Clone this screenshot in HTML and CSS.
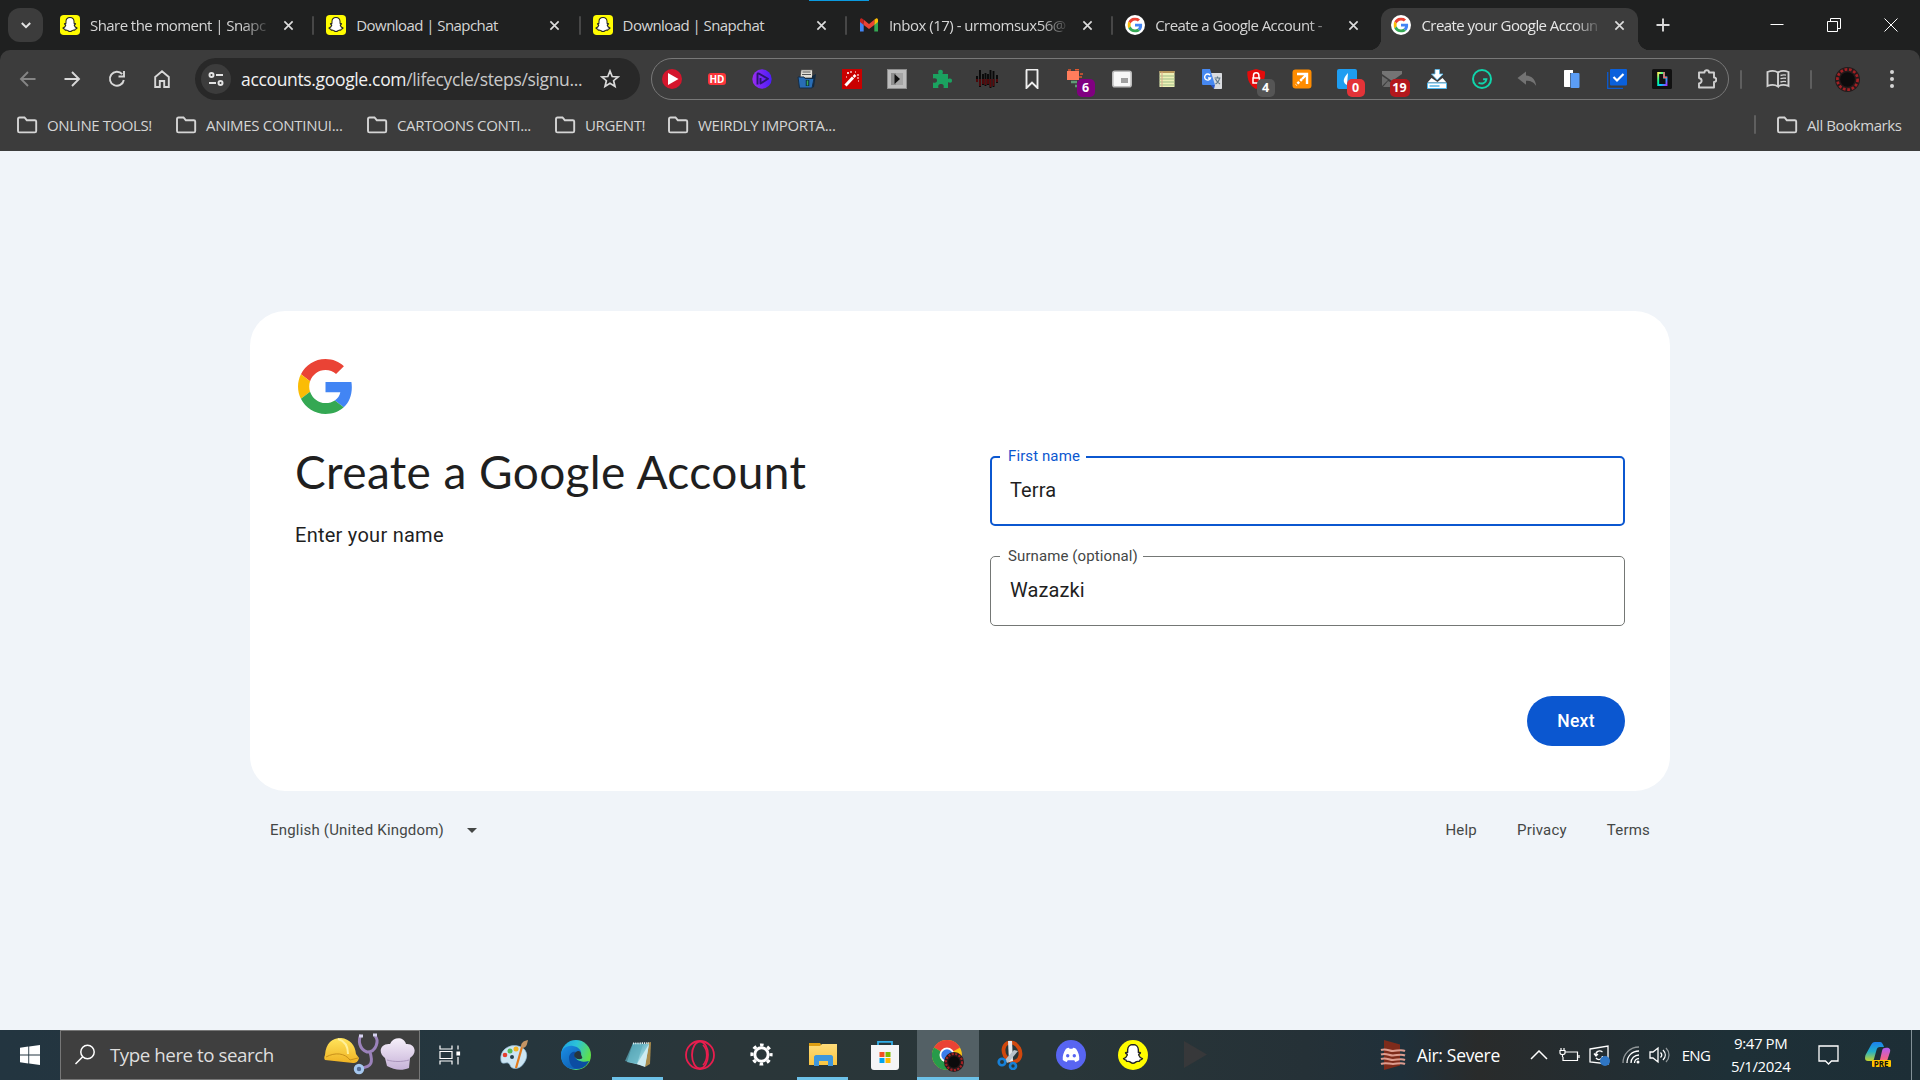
FILE: index.html
```html
<!DOCTYPE html>
<html lang="en">
<head>
<meta charset="utf-8">
<title>Create your Google Account</title>
<link rel="stylesheet" href="styles.css">
</head>
<body>
<svg class="defs" width="0" height="0" aria-hidden="true">
  <defs>
    <linearGradient id="edgeTop" x1="0" y1="0" x2="1" y2=".4"><stop offset="0" stop-color="#1b9de2"/><stop offset=".5" stop-color="#2cc3d8"/><stop offset="1" stop-color="#5ee04b"/></linearGradient>
    <linearGradient id="edgeLow" x1="0" y1="0" x2="1" y2="1"><stop offset="0" stop-color="#1a8fe6"/><stop offset="1" stop-color="#0b4fa0"/></linearGradient>
    <linearGradient id="helmet" x1="0" y1="0" x2="0" y2="1"><stop offset="0" stop-color="#ffe45c"/><stop offset="1" stop-color="#f0b323"/></linearGradient>
    <linearGradient id="hat" x1="0" y1="0" x2="0" y2="1"><stop offset="0" stop-color="#f6effa"/><stop offset="1" stop-color="#c6b2d8"/></linearGradient>
    <linearGradient id="violet" x1="0" y1="0" x2="1" y2="0"><stop offset="0" stop-color="#9a2cf0"/><stop offset="1" stop-color="#4b1dfa"/></linearGradient>
    <linearGradient id="note" x1="0" y1="0" x2="1" y2="1"><stop offset="0" stop-color="#2f8095"/><stop offset=".6" stop-color="#8fd0dc"/><stop offset="1" stop-color="#e2f5f8"/></linearGradient>
    <linearGradient id="folderY" x1="0" y1="0" x2="0" y2="1"><stop offset="0" stop-color="#ffdc7a"/><stop offset="1" stop-color="#fbc540"/></linearGradient>
    <linearGradient id="copA" x1="0" y1="0" x2="0" y2="1"><stop offset="0" stop-color="#1b7ff0"/><stop offset=".5" stop-color="#23b0c8"/><stop offset="1" stop-color="#c5d52c"/></linearGradient>
    <linearGradient id="copB" x1="0" y1="0" x2="0" y2="1"><stop offset="0" stop-color="#b35cf5"/><stop offset=".6" stop-color="#f0628e"/><stop offset="1" stop-color="#fd9a57"/></linearGradient>
    <linearGradient id="giph" x1="0" y1="0" x2="1" y2="1"><stop offset="0" stop-color="#fff35c"/><stop offset=".35" stop-color="#00ff99"/><stop offset=".65" stop-color="#00ccff"/><stop offset="1" stop-color="#9933ff"/></linearGradient>
    <symbol id="ghost" viewBox="0 0 24 24"><path d="M12 4c-2.800 0-4.300 2-4.300 4.300v2c-.6.300-1.400-.3-1.700.3-.2.700 1.500 1 1.500 1.700-.5 1.500-1.600 2.500-3 3 .2.900 1.400.9 2 1.200.2.600.2 1 .6 1 .8 0 1.400-.2 2.200.2.900.6 1.500 1.300 2.700 1.300s1.800-.7 2.700-1.300c.8-.4 1.400-.2 2.200-.2.400 0 .4-.4.6-1 .6-.3 1.800-.3 2-1.200-1.400-.5-2.500-1.500-3-3 0-.7 1.700-1 1.500-1.700-.3-.6-1.100 0-1.700-.3v-2C16.300 6 14.800 4 12 4Z" fill="#fff" stroke="#222" stroke-width="1.100"/></symbol>
    <symbol id="snap" viewBox="0 0 24 24"><rect width="24" height="24" rx="4.500" fill="#fffc00"/><use href="#ghost" x="-1.500" y="-1.500" width="27" height="27"/></symbol>
    <symbol id="g" viewBox="0 0 48 48"><path fill="#ea4335" d="M24 9.500c3.540 0 6.710 1.220 9.210 3.600l6.850-6.850C35.900 2.380 30.470 0 24 0 14.620 0 6.510 5.380 2.560 13.220l7.980 6.190C12.430 13.720 17.740 9.500 24 9.500z"/><path fill="#4285f4" d="M46.980 24.550c0-1.570-.15-3.090-.38-4.550H24v9.020h12.940c-.58 2.960-2.260 5.480-4.780 7.180l7.730 6c4.510-4.180 7.090-10.360 7.090-17.650z"/><path fill="#fbbc05" d="M10.530 28.590c-.48-1.450-.76-2.990-.76-4.590s.27-3.140.76-4.590l-7.980-6.190C.92 16.460 0 20.120 0 24c0 3.880.92 7.540 2.560 10.780l7.970-6.190z"/><path fill="#34a853" d="M24 48c6.480 0 11.930-2.130 15.890-5.810l-7.730-6c-2.150 1.450-4.920 2.300-8.160 2.300-6.260 0-11.570-4.220-13.470-9.910l-7.980 6.190C6.510 42.620 14.620 48 24 48z"/></symbol>
    <symbol id="gfav" viewBox="0 0 24 24"><circle cx="12" cy="12" r="12" fill="#fff"/><use href="#g" x="3" y="3" width="18" height="18"/></symbol>
    <symbol id="x" viewBox="0 0 12 12"><path d="M1.500 1.500l9 9m0-9l-9 9" stroke="currentColor" stroke-width="1.800" fill="none"/></symbol>
    <symbol id="folder" viewBox="0 0 22 18"><path d="M2 3.200C2 2.200 2.600 1.500 3.500 1.500h5l2.300 2.700h8c.8 0 1.400.6 1.400 1.400v9.300c0 .9-.6 1.500-1.400 1.500H3.500c-.9 0-1.500-.6-1.500-1.500Z" fill="none" stroke="currentColor" stroke-width="1.900"/></symbol>
    <symbol id="beads" viewBox="0 0 24 24"><circle cx="12" cy="12" r="12" fill="#251a1b"/><circle cx="12" cy="12" r="9.700" fill="none" stroke="#a32024" stroke-width="2.600" stroke-dasharray="2.600 1.660"/><circle cx="12" cy="12" r="7" fill="#0c0b0c"/></symbol>
  </defs>
</svg>

<header class="browser">
  <div class="load-strip"></div>
  <div class="tabstrip">
    <div class="tab-search"><svg width="12" height="12" viewBox="0 0 12 12"><path d="M1.800 4l4.200 4.200L10.200 4" fill="none" stroke="#e3e3e3" stroke-width="2"/></svg></div>
    <div class="tab"><svg class="fav"><use href="#snap"/></svg><span class="tab-title fade">Share the moment | Snapc</span><svg class="close"><use href="#x"/></svg></div>
    <div class="tab split"><svg class="fav"><use href="#snap"/></svg><span class="tab-title">Download | Snapchat</span><svg class="close"><use href="#x"/></svg></div>
    <div class="tab split"><svg class="fav"><use href="#snap"/></svg><span class="tab-title">Download | Snapchat</span><svg class="close"><use href="#x"/></svg></div>
    <div class="tab split"><svg class="fav" viewBox="0 0 20 20"><path d="M1 5v11.500h3.700V8z" fill="#4285f4"/><path d="M19 5v11.500h-3.700V8z" fill="#34a853"/><path d="M15.300 4.800 17 3.500c1-.7 2 .2 2 1.500v2l-3.700 3z" fill="#fbbc04"/><path d="M4.700 4.800 10 8.900l5.300-4.100V10L10 14 4.700 10z" fill="#ea4335"/><path d="M1 5c0-1.300 1-2.200 2-1.500l1.700 1.300V10L1 7z" fill="#c5221f"/></svg><span class="tab-title fade inbox">Inbox (17) - urmomsux56@</span><svg class="close"><use href="#x"/></svg></div>
    <div class="tab split"><svg class="fav"><use href="#gfav"/></svg><span class="tab-title fade">Create a Google Account -</span><svg class="close"><use href="#x"/></svg></div>
    <div class="tab active"><svg class="fav"><use href="#gfav"/></svg><span class="tab-title fade">Create your Google Accoun</span><svg class="close"><use href="#x"/></svg></div>
    <svg class="new-tab" width="14" height="14" viewBox="0 0 14 14"><path d="M7 .5v13M.5 7h13" stroke="#dadada" stroke-width="1.900"/></svg>
    <div class="win-controls">
      <svg viewBox="0 0 14 14"><path d="M.5 6.500h13" stroke="#fff"/></svg>
      <svg viewBox="0 0 14 14" fill="none" stroke="#fff"><path d="M.5 3.500h10v10H.5zM3.500 3.500v-3h10v10h-3"/></svg>
      <svg viewBox="0 0 14 14"><path d="M.5.500l13 13m0-13l-13 13" stroke="#fff"/></svg>
    </div>
  </div>

  <div class="toolbar">
    <nav class="nav">
      <svg class="dim" viewBox="0 0 20 20"><path d="M17.500 10H3M10 3l-7 7 7 7"/></svg>
      <svg viewBox="0 0 20 20"><path d="M2.500 10H17M10 3l7 7-7 7"/></svg>
      <svg viewBox="0 0 20 20"><path d="M16.800 11A7 7 0 1 1 15.200 5.200M17 2v5.500h-5.500"/></svg>
      <svg viewBox="0 0 20 20"><path d="M3.200 8 10 2.300 16.800 8v10h-4.600v-6H7.800v6H3.200z"/></svg>
    </nav>
    <div class="omnibox">
      <span class="site-info"><svg width="18" height="18" viewBox="0 0 18 18" fill="none" stroke="#e3e3e3" stroke-width="2"><circle cx="4.500" cy="5" r="2"/><path d="M9 5h7M2 13h7"/><circle cx="13.500" cy="13" r="2"/></svg></span>
      <span class="url"><b>accounts.google.com</b>/lifecycle/steps/signu...</span>
      <svg class="star" width="20" height="20" viewBox="0 0 20 20"><path d="M10 2l2.200 5.500 5.900.4-4.500 3.800 1.400 5.800-5-3.200-5 3.200 1.400-5.800L1.900 7.900l5.900-.4z" fill="none" stroke="#dadada" stroke-width="1.700"/></svg>
    </div>
    <div class="extensions">
      <span class="ext"><svg viewBox="0 0 20 20"><circle cx="10" cy="10" r="10" fill="#d4162c"/><path d="M6 4v12l10.500-6z" fill="#fff"/></svg></span>
      <span class="ext"><b class="hd">HD</b></span>
      <span class="ext"><svg viewBox="0 0 20 20"><circle cx="10" cy="10" r="9.700" fill="url(#violet)"/><path d="M5.500 15.500V5.200c0-.8.800-1 1.500-.6l9 5.200-7.500 4.700V9" fill="none" stroke="#2c1470" stroke-width="1.900" stroke-linejoin="round"/></svg></span>
      <span class="ext"><svg viewBox="0 0 20 20"><path d="M3 9 4 .8h11.500V9z" fill="#e3e0d8" stroke="#333" stroke-width=".7"/><path d="M5.500 3h8M5 5.500h9" stroke="#555"/><path d="M15 7l4-2-2 13-3 1z" fill="#12293f"/><path d="M1 8h6l1 1.500h9L15 19H2.500z" fill="#286db5" stroke="#142d47"/><path d="M10.500 11v6" stroke="#0c2c3c" stroke-width="3.500"/><path d="M10.500 11.500v5" stroke="#37a85b" stroke-width="1.500" fill="none"/></svg></span>
      <span class="ext"><svg viewBox="0 0 20 20"><rect width="20" height="20" fill="#c90000"/><path d="M3.500 16.500 11 8.500" stroke="#fff" stroke-width="3"/><path d="M11.500 8l2-2" stroke="#fff" stroke-width="2.500"/><path d="M5 4h2M6 3v2M9 2v2M13 3h1M16 5v2M15 9h2M16 12h1M4 8h1" stroke="#fff" stroke-width="1.100"/></svg></span>
      <span class="ext"><svg viewBox="0 0 20 20"><rect width="20" height="20" fill="#8d8d8d"/><rect x="1" y="1" width="18" height="18" fill="#bdbdbd"/><rect x="4" y="4" width="12" height="12" fill="#8e8e8e"/><rect x="9" y="4" width="7" height="12" fill="#a5a5a5"/><path d="M7.500 5v10l5.500-5z" fill="#111"/></svg></span>
      <span class="ext"><svg viewBox="0 0 20 20"><path d="M1 5h5.500C5.500 2 6.500.700 8.500.700s3 1.300 2 4.300H16v5c3-1 4 0 4 1.700s-1 2.600-4 1.600V19h-4.500c.8-3-.4-4-2.500-4s-3.300 1-2.500 4H1v-5.500c3 .8 4-.3 4-2s-1-2.600-4-2z" fill="#1ba260"/></svg></span>
      <span class="ext wide"><svg viewBox="0 0 22 20"><path d="M1 7v6M4 1v17M7 5v11M9.500 4v13M12 5v11M14.500 1v18M17.500 2v16M21 6v8" stroke="#090909" stroke-width="1.900"/><path d="M1 10v3M4 10v7M7 10v5M9.500 10v6M12 10v5M14.500 10v8M17.500 10v7M21 10v3" stroke="#5a0a0c" stroke-width="1.700"/></svg></span>
      <span class="ext"><svg viewBox="0 0 20 20"><path d="M4.500 1.500c0-.6.300-1 1-1h9c.7 0 1 .4 1 1V19L10 13.500 4.500 19z" fill="none" stroke="#eee" stroke-width="1.900"/></svg></span>
      <span class="ext"><svg viewBox="0 0 20 20"><path d="M0 2h12v9H0z" fill="#ff7d5c"/><path d="M1 1h3M8 .7h4M13 5h3M12 8h3" stroke="#e2572f" stroke-width="1.600"/><path d="M4 13h6M8 17h3" stroke="#609b78" stroke-width="2.500" fill="none"/></svg><i class="badge purple">6</i></span>
      <span class="ext"><svg viewBox="0 0 20 20"><rect x=".8" y="2.300" width="18.400" height="15.400" rx="2" fill="#f7f7f7" stroke="#bbb" stroke-width="1.600"/><rect x="9" y="9" width="7" height="5" fill="#a0a0a0"/></svg></span>
      <span class="ext"><svg viewBox="0 0 20 20"><rect x="2.500" y="2" width="15" height="16" fill="#eef0b6"/><path d="M2.500 3h15" stroke="#b7975c" stroke-width="2"/><path d="M2.500 7h15M2.500 10h15M2.500 13h15M2.500 16h15" stroke="#9dbd87"/><path d="M5 3v15" stroke="#dca98a"/></svg></span>
      <span class="ext"><svg viewBox="0 0 20 20"><path d="M8 4h11c.6 0 1 .4 1 1v14c0 .6-.4 1-1 1h-7z" fill="#dadce0"/><path d="M1 0h7l5 16H1.500C.5 16 0 15.500 0 14.500V1c0-.6.400-1 1-1z" fill="#4688f1"/><path d="M8.500 16h4.500l-1 4z" fill="#2a56c6"/><path d="M8 6.200A3 3 0 1 0 8.500 9H6" fill="none" stroke="#fff" stroke-width="1.400"/><path d="M12.500 9h6M15.500 7.500V9M17.500 9c0 2-2 5-4 6m0-5c1 2 2.500 4 4.500 5" fill="none" stroke="#607988" stroke-width="1.200"/></svg></span>
      <span class="ext"><svg viewBox="0 0 20 20"><path d="M9 0l9 2.500c.3 8-2 14-9 17.500C2.500 16.500 0 10.500.3 2.500z" fill="#e50b0b"/><path d="M6.500 9V6.500a2.700 2.700 0 0 1 5.400 0V9M6 9h6.500v5H6z" fill="none" stroke="#fff" stroke-width="1.500"/></svg><i class="badge grey">4</i></span>
      <span class="ext"><svg viewBox="0 0 20 20"><rect x=".5" y=".5" width="19" height="19" rx="3" fill="#ff8c00"/><path d="M5 5h10v10M15 5l-5 5" fill="none" stroke="#fff" stroke-width="2.400"/><path d="M10 10 4 16" stroke="#fff" stroke-width="2.500" stroke-dasharray="2.500 1.500"/></svg></span>
      <span class="ext"><svg viewBox="0 0 20 20"><rect width="20" height="20" rx="2" fill="#1e9df1"/><path d="M11 4c-6 6-5 10-1 12" fill="#fff"/></svg><i class="badge red">0</i></span>
      <span class="ext"><svg viewBox="0 0 20 20"><path d="M0 2h20v3l-10 7L0 5z" fill="#747474"/><path d="M0 7l6 4-6 6zM10 14l3-2 6 6H1l5-6z" fill="#6a6a6a"/></svg><i class="badge crimson">19</i></span>
      <span class="ext"><svg viewBox="0 0 20 20"><path d="M8 .5h4.500V5H16l-5.800 6L4.500 5H8z" fill="#fff" stroke="#58bdf1" stroke-width=".8"/><path d="M4.500 9 .5 13.500h19L15.500 9l-5 4z" fill="#fff"/><path d="M.5 14h19v5.500H.5z" fill="#fff" stroke="#4eb8ef"/><path d="M2.500 17h10" stroke="#3ba7df" stroke-width="1.300"/></svg></span>
      <span class="ext"><svg viewBox="0 0 20 20"><circle cx="10" cy="10" r="9" fill="none" stroke="#10d5ab" stroke-width="2"/><path d="M6.500 13.700c3.500 2 7.500.3 7.900-3.400h-3.300" fill="none" stroke="#10d5ab" stroke-width="1.900"/></svg></span>
      <span class="ext"><svg viewBox="0 0 20 20"><path d="M.5 9 9 2.500v4c6 .3 9.500 4.500 10.200 10.500-2.500-4-5.500-5.300-10.200-5.300v4z" fill="#737373"/></svg></span>
      <span class="ext"><svg viewBox="0 0 20 20"><path d="M3 1h8v3H8v14H3c-.6 0-1-.4-1-1V2c0-.6.400-1 1-1z" fill="#fff"/><rect x="8.500" y="4" width="9" height="15" rx="1" fill="#5b9df5"/></svg></span>
      <span class="ext"><svg viewBox="0 0 20 20"><path d="M.700 3v16.300H16" fill="none" stroke="#0a5ad0" stroke-width="1.300"/><rect x="3" y="0" width="17" height="16.500" rx="1" fill="#0a60dc"/><path d="M6.500 8l3.500 3.500L16.500 5" fill="none" stroke="#fff" stroke-width="2.200"/></svg></span>
      <span class="ext"><svg viewBox="0 0 20 20"><rect width="20" height="20" rx="1.500" fill="#111"/><path d="M12 4H6.200v12h8.300V8.500H12z" fill="none" stroke="url(#giph)" stroke-width="1.900"/><path d="M12 3v5.500h3" stroke="#ff5f66" stroke-width="1.500" fill="none"/></svg></span>
      <span class="ext"><svg viewBox="0 0 20 20"><path d="M2 3.500h5.500c0-3 4.500-3 4.500 0h5v5c3 0 3 4.500 0 4.500v5.500H2v-4c3.500-.8 3.500-4.700 0-5.500z" fill="none" stroke="#cfcfcf" stroke-width="1.900" stroke-linejoin="round"/></svg></span>
    </div>
    <i class="rule rule-a"></i>
    <svg class="reading" width="24" height="20" viewBox="0 0 24 20" fill="none" stroke="#d2d2d2" stroke-width="1.900"><path d="M12 3.500v14c-3-2-7-2-10.500-.5V3C5 1.500 9 1.500 12 3.500c3-2 7-2 10.500-.5v14c-3.500-1.500-7.500-1.500-10.500.5"/><path d="M14.500 6.500c2-.7 3.500-.8 5.500-.4M14.500 9.700c2-.7 3.500-.8 5.500-.4M14.500 13c2-.7 3.500-.8 5.500-.4" stroke-width="1.400"/></svg>
    <i class="rule rule-b"></i>
    <svg class="avatar"><use href="#beads"/></svg>
    <svg class="dots" width="6" height="20" viewBox="0 0 6 20" fill="#d5d5d5"><circle cx="3" cy="3" r="2"/><circle cx="3" cy="10" r="2"/><circle cx="3" cy="17" r="2"/></svg>
  </div>

  <div class="bookmarks">
    <span class="bm w1"><svg><use href="#folder"/></svg><span>ONLINE TOOLS!</span></span>
    <span class="bm w2"><svg><use href="#folder"/></svg><span>ANIMES CONTINUI...</span></span>
    <span class="bm w3"><svg><use href="#folder"/></svg><span>CARTOONS CONTI...</span></span>
    <span class="bm w4"><svg><use href="#folder"/></svg><span>URGENT!</span></span>
    <span class="bm w5"><svg><use href="#folder"/></svg><span>WEIRDLY IMPORTA...</span></span>
    <i class="rule bm-rule"></i>
    <span class="bm all"><svg><use href="#folder"/></svg><span>All Bookmarks</span></span>
  </div>
</header>

<main class="page">
  <section class="card">
    <div class="intro">
      <svg class="logo"><use href="#g"/></svg>
      <h1>Create a Google Account</h1>
      <p>Enter your name</p>
    </div>
    <form class="form">
      <fieldset class="field focused"><legend>First name</legend><span class="value">Terra</span></fieldset>
      <fieldset class="field"><legend>Surname (optional)</legend><span class="value">Wazazki</span></fieldset>
      <button class="next" type="button">Next</button>
    </form>
  </section>
  <footer class="footer">
    <span class="lang">English (United Kingdom)</span><i class="caret"></i>
    <nav class="links"><span>Help</span><span>Privacy</span><span>Terms</span></nav>
  </footer>
</main>

<div class="taskbar">
  <div class="start"><svg width="20" height="20" viewBox="0 0 20 20" fill="#fff"><path d="M0 2.800 8.300 1.600v7.900H0zM9.200 1.500 20 0v9.500H9.200zM0 10.400h8.300v8L0 17.200zM9.200 10.400H20V20L9.200 18.500z"/></svg></div>
  <div class="search">
    <svg class="glass" width="22" height="22" viewBox="0 0 22 22" fill="none" stroke="#fff" stroke-width="1.500"><circle cx="13.500" cy="8" r="6.700"/><path d="M8.700 12.800 1.500 20"/></svg>
    <span class="search-text">Type here to search</span>
    <svg class="doodle" width="94" height="44" viewBox="0 0 94 44"><path d="M2 22C3 10 9 5 18 5c9 1 14 7 15 16l3 4c-1 4-3 5-6 5L2 27c-1-1-1-3 0-5z" fill="url(#helmet)"/><path d="M3 24c9-5 19-4 24 3l8-2" fill="none" stroke="#c8901a"/><path d="M15 6c7 2 10 8 10 15" fill="none" stroke="#fff09a" stroke-width="2"/><path d="M38 2c-3 5-2 14 6 17 10 0 12-12 8-16M47 19c3 10 2 15-9 16" fill="none" stroke="#9b82bb" stroke-width="3"/><path d="M36 3h4M50 2h4" stroke="#d5d2ee" stroke-width="3"/><circle cx="36" cy="36" r="3.700" fill="#526b95" stroke="#a6c8ef" stroke-width="3"/><path d="M62 25c-8-6-4-15 5-14 4-8 14-7 16 0 9-1 12 9 4 14l-1 10c-7 3-15 2-22-2z" fill="url(#hat)"/><path d="M64 27c7 2 15 2 22 0" stroke="#aa94bd" fill="none"/></svg>
  </div>
  <div class="task view"><svg width="22" height="20" viewBox="0 0 22 20" fill="none" stroke="#fff" stroke-width="1.200"><path d="M1 .5V4h12V.5M1 19.500V16h12v3.500M1 6.500h12v7H1zM19 .5v4M19 12v7.500"/><path d="M18 7h2.500v3H18z" fill="#fff"/></svg></div>
  <div class="task"><svg viewBox="0 0 30 30"><path d="M2 21C0 10 10 4 19 6c9 2 11 10 6 17-4 7-13 7-14 2-2-5-8 1-9-4z" fill="#cce5f3" stroke="#8fb9d4" stroke-width=".7"/><circle cx="11" cy="11" r="2.500" fill="#55b957"/><circle cx="17" cy="9" r="2.500" fill="#f3b324"/><circle cx="6" cy="15" r="2.300" fill="#e53e31"/><circle cx="13" cy="17" r="2" fill="#28414d"/><path d="M23 7 17 28" stroke="#e37b1d" stroke-width="2.200"/><path d="M22 7c0-4 2-6 7-7-1 4-1 7-5 8z" fill="#c49464"/></svg></div>
  <div class="task"><svg viewBox="0 0 30 30"><circle cx="15" cy="15" r="15" fill="url(#edgeTop)"/><path d="M0 15c0-6 6-10 12-9 7 1 9 6 8 9-1-4-7-4-8 0-1 7 6 9 15 7-5 9-27 12-27-7z" fill="url(#edgeLow)"/><path d="M8 17c1-5 5-6 7-5-4 5 2 12 13 9-5 11-20 11-20-4z" fill="#0c4da2"/><path d="M15 12c-4 3-1 8 5 7 3-1 0-3 0-5 0-3-3-4-5-2z" fill="#26353c"/></svg></div>
  <div class="task open"><svg viewBox="0 0 30 30"><path d="M24 3l4-1-1 22-5 3z" fill="#a98b4c"/><path d="M10 3l16 1-4 22-18-4z" fill="url(#note)"/><path d="M10 3 2 21l12 3 6-20z" fill="#5eaebe" opacity=".7"/><path d="M26 4 14 24l8 3z" fill="#cdebf1"/><path d="M10 3.500l16-.5" stroke="#e3eef0" stroke-width="1.800" stroke-dasharray="1.200 1"/></svg></div>
  <div class="task"><svg viewBox="0 0 30 30" fill="none" stroke="#e81e4e"><circle cx="15" cy="15" r="14" stroke-width="1.800"/><ellipse cx="15" cy="15" rx="8" ry="13.500" stroke-width="1.800"/><path d="M18 5c5 5 5 15 0 20" stroke-width="1.600"/></svg></div>
  <div class="task"><svg viewBox="0 0 30 30" fill="none" stroke="#fff"><circle cx="14.500" cy="14.500" r="6.700" stroke-width="3"/><circle cx="14.500" cy="14.500" r="9.600" stroke-width="3" stroke-dasharray="3.600 3.940" stroke-dashoffset="1.800"/></svg></div>
  <div class="task open"><svg viewBox="0 0 30 30"><path d="M1 3h11l2 3H1z" fill="#dd9e12"/><path d="M1 6h11l2-2h15v21H1z" fill="url(#folderY)"/><path d="M6 26V17c0-1 1-2 2-2h15c1 0 2 1 2 2v9h-5v-5h-9v5z" fill="#3f97dc"/></svg></div>
  <div class="task"><svg viewBox="0 0 30 30"><path d="M8 7V1.800h14V7" fill="none" stroke="#32aee8" stroke-width="1.800"/><path d="M1 5h28v22a3 3 0 0 1-3 3H4a3 3 0 0 1-3-3z" fill="#f5f5f7"/><path d="M9.500 12h5v5h-5z" fill="#f25022"/><path d="M15.500 12h5v5h-5z" fill="#7fba00"/><path d="M9.500 18h5v5h-5z" fill="#00a4ef"/><path d="M15.500 18h5v5h-5z" fill="#ffb900"/></svg></div>
  <div class="task open current"><svg viewBox="0 0 34 32"><circle cx="15" cy="15" r="15" fill="#fbc116"/><path d="M15 15 2 7.500A15 15 0 0 1 28 7.500z" fill="#ea4335"/><path d="M15 15 2 7.500A15 15 0 0 0 15 30l6-11z" fill="#279b4a"/><circle cx="15" cy="15" r="7.500" fill="#fff"/><circle cx="15" cy="15" r="5.700" fill="#3b7ded"/><use href="#beads" x="12" y="12" width="20" height="20"/></svg></div>
  <div class="task"><svg viewBox="0 0 30 30"><ellipse cx="18" cy="12" rx="8" ry="10" transform="rotate(-28 18 12)" fill="none" stroke="#d2480d" stroke-width="3.800"/><path d="M14 1h4l1 20-4 1z" fill="#e5e8eb"/><path d="M20 10l4 1-10 12-4-2z" fill="#b9c2ca"/><circle cx="8" cy="22" r="3.300" fill="none" stroke="#1680d8" stroke-width="2.600"/><circle cx="19" cy="26" r="3" fill="none" stroke="#1680d8" stroke-width="2.600"/></svg></div>
  <div class="task"><svg viewBox="0 0 30 30"><circle cx="15" cy="15" r="15" fill="#5865f2"/><path d="M10 8.700c1-.5 2-.8 3-.9l.5 1h3l.5-1c1 .1 2 .4 3 .9 2.500 3.600 3.700 7.400 3.200 11.300-1.200 1-2.500 1.600-4 2l-.9-1.700h-6.600l-.9 1.700c-1.500-.4-2.800-1-4-2-.4-4 .7-7.700 3.200-11.300z" fill="#fff"/><circle cx="11.700" cy="15.700" r="1.700" fill="#5865f2"/><circle cx="18.300" cy="15.700" r="1.700" fill="#5865f2"/></svg></div>
  <div class="task"><svg viewBox="0 0 30 30"><circle cx="15" cy="15" r="15" fill="#fffc00"/><use href="#ghost" x="0" y="-.5" width="30" height="30"/></svg></div>
  <div class="task"><svg viewBox="0 0 30 30"><path d="M4 1v27l23-13.500z" fill="#37383a"/></svg></div>
  <div class="tray">
    <svg class="air" width="26" height="30" viewBox="0 0 26 30"><path d="M4 0l16 4.500v21L4 30z" fill="#7e2b1b"/><g fill="none" stroke="#dd9c8f" stroke-width="2"><path d="M1 10c5-2 8 1 12 1s8-2 12 0M1 14.500c5-2 8 1 12 1s8-2 12 0M1 19c5-2 8 1 12 1s8-2 12 0M1 24c5-2 8 0 12 0s8-2 12 0"/></g></svg>
    <span class="air-text">Air: Severe</span>
    <svg class="t-ico chev" width="18" height="10" viewBox="0 0 18 10"><path d="M1 9l8-8 8 8" fill="none" stroke="#fff" stroke-width="1.500"/></svg>
    <svg class="t-ico" width="21" height="15" viewBox="0 0 21 15" fill="none" stroke="#fff" stroke-width="1.200"><path d="M6 4h12.500v8.500H4V9M20 7v3M1 2.500h5V5c0 2-5 2-5 0zM2 0v2.500M5 0v2.500M3.500 6.500V9"/></svg>
    <svg class="t-ico" width="21" height="21" viewBox="0 0 21 21" fill="none" stroke="#fff" stroke-width="1.300"><path d="M1 4l18-3v18L1 17z"/><path d="M13.500 7C10 4.500 6.500 7 7 10M5 8.500 7 11l2-2M7 13c2 2.500 6 2 6.500-2"/><circle cx="16" cy="16" r="5" fill="#2f76c4" stroke="none"/></svg>
    <svg class="t-ico wifi" width="18" height="18" viewBox="0 0 18 18" fill="none" stroke="#fff" stroke-width="1.300"><path d="M1 17C1 8 8 1 17 1" opacity=".5"/><path d="M5 17C5 10 10 5 17 5M9 17c0-4.500 3.500-8 8-8M12.500 17c0-2.500 2-4.500 4.500-4.500"/><circle cx="16" cy="16" r="1.500" fill="#fff" stroke="none"/></svg>
    <svg class="t-ico" width="21" height="18" viewBox="0 0 21 18" fill="none" stroke="#fff" stroke-width="1.300"><path d="M1 6h3l5-4v14l-5-4H1zM11.500 6.500c1.500 1.500 1.500 3.500 0 5M14 4c3 3 3 7 0 10"/><path d="M17 2c4 4 4 10 0 14" opacity=".5"/></svg>
    <span class="eng">ENG</span>
    <span class="clock"><span>9:47 PM</span><span class="date">5/1/2024</span></span>
    <svg class="notif" width="21" height="20" viewBox="0 0 21 20"><path d="M1 1h19v15h-6.500L10.500 19l-3-3H1z" fill="none" stroke="#fff" stroke-width="1.300"/></svg>
    <span class="copilot"><svg width="26" height="24" viewBox="0 0 26 24"><path d="M6 3C7 1 8 0 10 0h5c2 0 3 2 4 5h-4c-2 0-3 1-3.500 3L9 17c-.5 1.500-1 2-3 2H3c-3 0-3.500-2-2.500-6z" fill="url(#copA)"/><path d="M20 6c4-1 6 1 5 4l-3 9c-1 3-2 4-4 4h-7c2 0 3-1 3.500-3L17 9c.5-2 1-3 3-3z" fill="url(#copB)"/></svg><b>PRE</b></span>
  </div>
</div>
</body>
</html>
```
FILE: styles.css
```css
* { box-sizing: border-box; }
body { margin: 0; width: 1920px; height: 1080px; overflow: hidden; display: flex; flex-direction: column; font-family: "Open Sans", "Noto Sans", sans-serif; background: #f0f4f9; }
svg { display: block; flex: none; }
.defs { position: absolute; }
i { font-style: normal; }

/* Browser chrome */
.browser { height: 151px; flex: none; background: #1f2020; color: #d5d5d5; position: relative; }
.load-strip { position: absolute; left: 809px; top: 0; width: 60px; height: 1px; background: #0a9ae0; }
.tabstrip { height: 50px; display: flex; align-items: center; padding-left: 8px; }
.tab-search { width: 35px; height: 34px; border-radius: 12px; background: #3c3c3c; display: flex; align-items: center; justify-content: center; margin-right: 5px; }
.tab { width: 266.300px; height: 42px; margin-top: 8px; padding: 0 0 8px 12px; display: flex; align-items: center; flex: none; position: relative; }
.tab.split::before { content: ""; position: absolute; left: -2px; top: 8px; width: 2px; height: 19px; background: #474747; border-radius: 1px; }
.fav { width: 20px; height: 20px; margin-right: 10px; }
.tab-title { width: 179px; white-space: nowrap; font-size: 15px; letter-spacing: -.56px; line-height: 22px; }
.inbox { letter-spacing: -.5px; }
.fade { -webkit-mask-image: linear-gradient(90deg, #000 152px, transparent 182px); mask-image: linear-gradient(90deg, #000 152px, transparent 182px); }
.close { width: 11px; height: 11px; margin-left: 14px; color: #dcdcdc; }
.tab.active { color: #e6e6e6; }
.tab.active::before { content: ""; position: absolute; z-index: 0; left: 2px; top: 0; width: 257px; height: 42px; background: #3c3c3c; border-radius: 12px 12px 0 0; }
.tab.active::after { content: ""; position: absolute; left: -10px; bottom: 0; width: 281px; height: 12px; background: radial-gradient(circle at 0 0, transparent 12px, #3c3c3c 12.500px) left / 12px 12px no-repeat, radial-gradient(circle at 100% 0, transparent 12px, #3c3c3c 12.500px) right / 12px 12px no-repeat; }
.tab.active > * { position: relative; z-index: 1; }
.new-tab { margin-left: 10.700px; }
.win-controls { display: flex; gap: 43px; margin-left: 100px; }
.win-controls svg { width: 14px; height: 14px; }

.toolbar { height: 58px; background: #3c3c3c; border-radius: 10px 10px 0 0; display: flex; align-items: center; padding-left: 17.500px; }
.nav { display: flex; gap: 24.800px; width: 177.500px; flex: none; }
.nav svg { width: 20px; height: 20px; fill: none; stroke: #d8d8d8; stroke-width: 1.900; }
.nav .dim { stroke: #858585; }
.omnibox { width: 445px; height: 42px; border-radius: 21px; background: #282828; display: flex; align-items: center; padding-left: 6px; flex: none; }
.site-info { width: 30px; height: 30px; border-radius: 50%; background: #3c3c3c; display: flex; align-items: center; justify-content: center; flex: none; }
.url { width: 349px; margin-left: 10px; font-size: 17.500px; letter-spacing: -.34px; white-space: nowrap; color: #c9c9c9; }
.url b { font-weight: 400; color: #f1f1f1; }
.star { margin-left: 10px; }
.extensions { width: 1078px; height: 42px; margin-left: 11px; border: 1px solid #787878; border-radius: 21px; display: flex; align-items: center; justify-content: center; flex: none; }
.ext { width: 45px; height: 20px; flex: none; display: flex; align-items: center; justify-content: center; position: relative; right: .5px; }
.ext svg { width: 20px; height: 20px; }
.ext.wide svg { width: 22px; }
.hd { background: #fa3439; color: #fff; font-size: 10px; line-height: 12px; width: 18px; text-align: center; border-radius: 3px; }
.badge { position: absolute; left: 22px; top: 10px; width: 18px; height: 18px; border-radius: 5px; color: #fff; font-weight: 700; font-size: 12.500px; line-height: 18px; text-align: center; }
.purple { background: #800080; }
.grey { background: #555; }
.red { background: #e33338; }
.crimson { background: #b3181d; left: 20px; width: 20px; }
.rule { width: 2px; height: 19px; background: #5f5f5f; border-radius: 1px; flex: none; }
.rule-a { margin: 0 24px 0 11px; }
.rule-b { margin: 0 23px 0 20px; }
.avatar { width: 25px; height: 25px; }
.dots { margin-left: 29px; }

.bookmarks { height: 43px; background: #3c3c3c; display: flex; align-items: center; padding: 0 0 9.500px 16px; font-size: 15px; }
.bm { display: flex; align-items: center; gap: 9px; white-space: nowrap; flex: none; }
.bm svg { width: 22px; height: 18px; }
.w1 { width: 159px; letter-spacing: -.4px; }
.w2 { width: 191px; letter-spacing: -.3px; }
.w3 { width: 188px; letter-spacing: -.35px; }
.w4 { width: 113px; letter-spacing: -.4px; }
.w5 { width: 200px; letter-spacing: -.35px; }
.bm-rule { margin: 0 20px 0 auto; }
.all { width: 144px; letter-spacing: -.42px; }

/* Account page */
.page { flex: 1; padding: 160px 250px 0; font-family: Roboto, "Liberation Sans", sans-serif; color: #1f1f1f; }
.card { width: 1420px; height: 480px; border-radius: 35px; background: #fff; display: flex; justify-content: space-between; padding: 45px 45px; }
.logo { width: 55px; height: 55px; margin: 2.500px 0 0 2.500px; }
.intro h1 { margin: 30px 0 0; font: 400 46px/56px Lato, sans-serif; letter-spacing: .4px; white-space: nowrap; }
.intro p { margin: 20px 0 0; font-size: 20px; line-height: 30px; letter-spacing: .26px; }
.form { width: 635px; padding-top: 92px; display: flex; flex-direction: column; }
.field { width: 635px; height: 78px; margin: 0 0 22px; padding: 0 0 0 19px; border: 1px solid #747775; border-radius: 5px; min-width: 0; }
.field legend { margin-left: -10px; padding: 0 0 0 8px; height: 17px; font-size: 15px; line-height: 17px; color: #444746; width: 143px; white-space: nowrap; letter-spacing: .1px; }
.field.focused { border: 2px solid #0b57d0; padding-left: 18px; }
.field.focused legend { color: #0b57d0; width: 86px; }
.value { display: block; font-size: 20px; line-height: 28px; margin-top: 11px; letter-spacing: .1px; }
.next { align-self: flex-end; width: 98px; height: 50px; margin-top: 48px; border: 0; border-radius: 25px; background: #0b57d0; color: #fff; font: 500 17.500px Roboto, sans-serif; letter-spacing: .3px; }
.footer { display: flex; align-items: center; height: 78px; padding: 0 20px; font-size: 15px; color: #444746; letter-spacing: .2px; }
.lang { width: 197px; white-space: nowrap; }
.caret { border: 5px solid transparent; border-top-color: #444746; border-bottom: 0; }
.links { margin-left: auto; display: flex; gap: 40px; }

/* Windows taskbar */
.taskbar { height: 50px; flex: none; display: flex; align-items: center; background: linear-gradient(90deg, #233540 0, #25363e 25%, #2a3639 38%, #293639 55%, #253137 68%, #20303a 73%, #292b2b 77%, #242d31 83%, #1e3037 90%, #1d2e36 100%); color: #fff; }
.start { width: 60px; padding-left: 20px; flex: none; }
.search { width: 360px; height: 50px; border: 1px solid #777; background: #3f3f3f; display: flex; align-items: center; padding-left: 13px; flex: none; }
.search-text { width: 210px; margin: -1px 0 0 14px; font-size: 18.750px; letter-spacing: -.46px; color: #dedede; white-space: nowrap; }
.doodle { margin-left: 3px; }
.task { width: 61.900px; height: 50px; display: flex; align-items: center; justify-content: center; flex: none; position: relative; }
.task svg { width: 30px; height: 30px; }
.task.view { width: 63px; padding-right: 3px; }
.task.view svg { width: 22px; height: 20px; }
.open::after { content: ""; position: absolute; left: 5px; bottom: 0; width: 51px; height: 3px; background: #6cc1e8; }
.task.current { background: #536065; margin: 0 -1px 0 1px; }
.current::after { left: 0; width: 62px; }
.task.current svg { width: 34px; height: 32px; margin: 1px 0 0 2px; }
.tray { margin-left: 154px; display: flex; align-items: center; }
.air-text { margin-left: 11px; width: 113px; font-size: 17.500px; letter-spacing: -.32px; white-space: nowrap; }
.t-ico { margin-right: 9px; }
.t-ico.chev { margin-right: 11px; }
.t-ico.wifi { margin-left: 3px; }
.eng { width: 38px; margin-left: 3px; font-size: 15px; letter-spacing: -.7px; }
.clock { width: 80px; margin-left: 1px; display: flex; flex-direction: column; text-align: center; font-size: 15px; line-height: 23px; letter-spacing: -.4px; white-space: nowrap; }
.notif { margin-left: 17px; }
.copilot { margin-left: 26px; width: 47px; height: 50px; position: relative; border-right: 1px solid #829097; padding-top: 12px; }
.copilot b { position: absolute; left: 7px; top: 30px; width: 19px; height: 7px; background: #ffc400; color: #111; font-size: 8px; line-height: 7px; text-align: center; border-radius: 1px; }
```
